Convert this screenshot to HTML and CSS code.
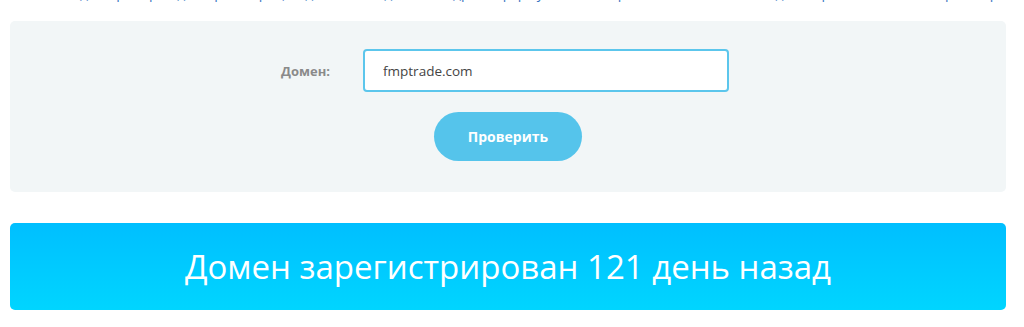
FILE: index.html
```html
<!DOCTYPE html>
<html lang="ru">
<head>
    <meta charset="UTF-8">
    <meta name="viewport" content="width=device-width, initial-scale=1.0">
    <title>Проверка возраста домена</title>
    <link rel="stylesheet" href="styles.css">
</head>
<body>
    <div class="page">
        <p class="intro">для проверки даты регистрации домена введите его адрес в форму ниже, и сервис покажет, сколько дней прошло с момента регистрации, будет ли домен продлён и когда срок истекает для продления</p>
        <div class="checker">
            <form class="checker-form" id="checkForm">
                <div class="form-row">
                    <label for="domain">Домен:</label>
                    <input type="text" id="domain" value="fmptrade.com">
                </div>
                <button type="button">Проверить</button>
            </form>
        </div>
        <div class="result">Домен зарегистрирован 121 день назад</div>
    </div>
</body>
</html>
```

FILE: styles.css
```css
body {
    margin: 0;
    background-color: #fff;
    font-family: 'Open Sans', 'Noto Sans', sans-serif;
}
.page {
    width: 996px;
    margin-left: 10px;
    overflow: hidden;
}
.intro {
    margin: -16px 0 0;
    padding-left: 70px;
    font-size: 14px;
    line-height: 18px;
    height: 22px;
    overflow: hidden;
    white-space: nowrap;
    color: #3a78c2;
}
.checker {
    margin-top: 15px;
    height: 171px;
    background-color: #f2f6f7;
    border-radius: 5px;
    box-sizing: border-box;
    padding-top: 28px;
}
.checker-form {
    display: flex;
    flex-direction: column;
    align-items: center;
}
.form-row {
    display: flex;
    align-items: center;
    margin-left: -6px;
}
label {
    width: 82px;
    font-size: 13px;
    font-weight: 700;
    color: #8a8a8a;
}
input {
    width: 366px;
    height: 43px;
    box-sizing: border-box;
    padding: 0 18px;
    font-family: inherit;
    font-size: 13.5px;
    color: #444;
    border: 2px solid #5cc6ec;
    border-radius: 4px;
    outline: none;
    background-color: #fff;
}
button {
    margin-top: 20px;
    width: 148px;
    height: 49px;
    border: none;
    border-radius: 25px;
    background-color: #55c4eb;
    color: #fff;
    font-family: inherit;
    font-size: 14px;
    font-weight: 700;
    cursor: pointer;
}
.result {
    margin-top: 31px;
    height: 87px;
    display: flex;
    align-items: center;
    justify-content: center;
    border-radius: 5px;
    background: linear-gradient(to bottom, #00bfff, #00d5ff);
    color: #fff;
    font-size: 33px;
    font-weight: 400;
}
```
